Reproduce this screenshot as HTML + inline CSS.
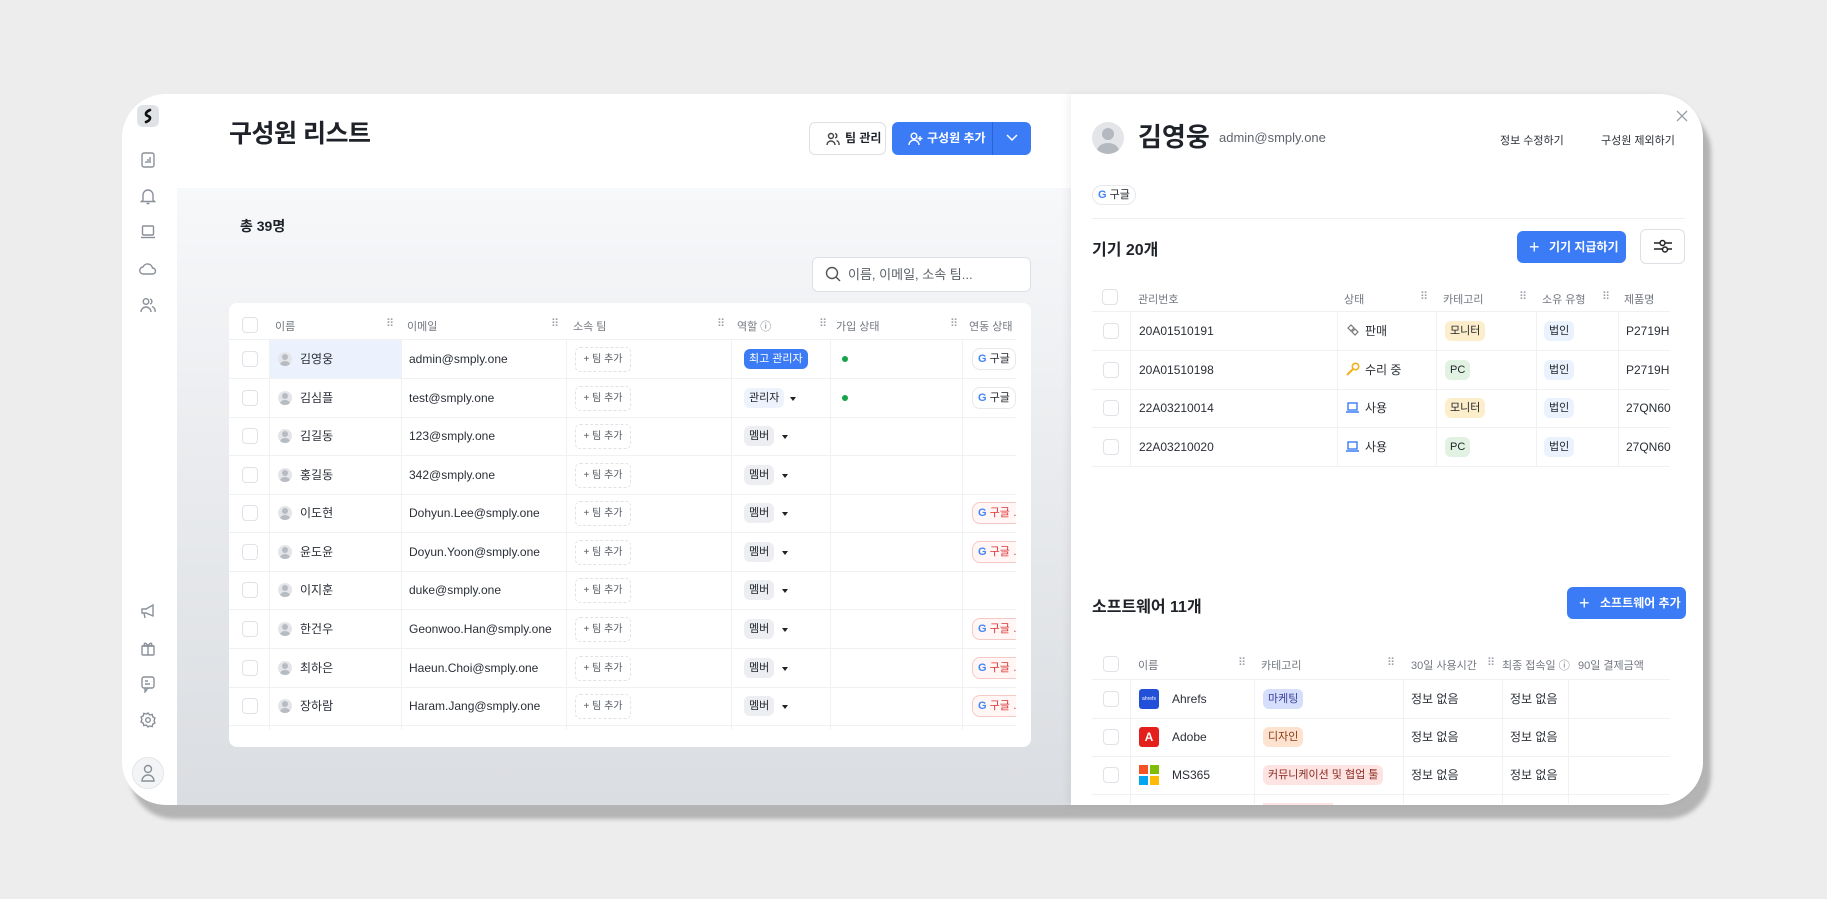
<!DOCTYPE html>
<html><head><meta charset="utf-8">
<style>
*{box-sizing:border-box;margin:0;padding:0}
body{width:1827px;height:899px;background:#ededed;font-family:"Liberation Sans","Noto Sans CJK KR",sans-serif;color:#1f2329;position:relative;overflow:hidden}
.a{position:absolute}
.win{left:122px;top:94px;width:1581px;height:711px;border-radius:44px;background:#fff;box-shadow:8px 14px 4px #b4b4b4;overflow:hidden}
.main{left:55px;top:94px;width:895px;height:617px;background:linear-gradient(#f7f8fa,#e9ebee 45%,#dadde1)}
.ic{stroke:#8a9099;fill:none;stroke-width:1.4}
.hdr{font-size:11px;color:#737880}
.dots{font-size:11px;color:#9aa0a8;letter-spacing:-1px}
.cb{width:16px;height:16px;border:1px solid #dfe2e6;border-radius:4px;background:#fff}
.row{left:0;width:100%;height:39px;border-bottom:1px solid #f0f1f3}
.t{font-size:12px;line-height:17px;color:#2a2f36;white-space:nowrap}
.av{width:14px;height:14px;border-radius:50%;background:#e3e5e8;overflow:hidden}
.av:before{content:"";position:absolute;left:4px;top:2px;width:6px;height:6px;border-radius:50%;background:#b7bcc3}
.av:after{content:"";position:absolute;left:2px;top:9px;width:10px;height:8px;border-radius:50%;background:#b7bcc3}
.team{width:56px;height:25px;border:1px dashed #dfe2e6;border-radius:5px;font-size:10px;color:#555b63;text-align:center;line-height:23px}
.badge{height:20px;border-radius:6px;font-size:11px;line-height:20px;padding:0 5px;white-space:nowrap}
.gp{height:22px;border:1px solid #e6e8eb;border-radius:8px;font-size:11px;line-height:20px;padding:0 5px;background:#fff;white-space:nowrap}
.gp.r{border-color:#f6c9c4;background:#fff6f5;color:#d33}
.G{font-weight:bold;color:#4285f4}
.vl{width:1px;background:#f0f1f3}
.tri{width:0;height:0;border-left:3px solid transparent;border-right:3px solid transparent;border-top:4px solid #222;top:18px}
</style></head><body>
<div class="a win">
  <div class="a" style="left:15px;top:11px;width:22px;height:22px;border-radius:6px;background:#dfe2e6"></div>
  <svg class="a" style="left:15px;top:11px" width="22" height="22"><path d="M13 5 C8 7 8 10 11 11 C14 12 14 15 9 17" stroke="#111" stroke-width="2.6" fill="none" stroke-linecap="round"/></svg>
  <svg class="a" style="left:19px;top:58px" width="14" height="16"><rect class="ic" x="1" y="1" width="12" height="14" rx="2"/><path class="ic" d="M5 11V9M7 11V7M9 11V5"/></svg>
  <svg class="a" style="left:18px;top:94px" width="16" height="17"><path class="ic" d="M3 12V7a5 5 0 0 1 10 0v5l1.5 1.5h-13zM6.5 15.5h3"/></svg>
  <svg class="a" style="left:18px;top:131px" width="16" height="14"><rect class="ic" x="2.5" y="1" width="11" height="9" rx="1"/><path class="ic" d="M1 12.5h14"/></svg>
  <svg class="a" style="left:17px;top:169px" width="18" height="12"><path class="ic" d="M4.5 11a3.5 3.5 0 0 1-.5-7A5 5 0 0 1 13.5 5a3 3 0 0 1 0 6z"/></svg>
  <svg class="a" style="left:18px;top:203px" width="16" height="16"><circle class="ic" cx="6" cy="4.5" r="2.8"/><path class="ic" d="M1 15a5 5 0 0 1 10 0M10 2a2.6 2.6 0 0 1 0 5M12 9.5a4.5 4.5 0 0 1 3 5.5"/></svg>
  <svg class="a" style="left:18px;top:509px" width="16" height="16"><path class="ic" d="M2 6h4l7-4v11l-7-3H2zM4 10l1 5"/></svg>
  <svg class="a" style="left:18px;top:546px" width="16" height="16"><rect class="ic" x="2" y="6" width="12" height="9" rx="1"/><path class="ic" d="M1.5 6h13M8 6v9M8 6C5 1 3 4 5 6M8 6c3-5 5-2 3 0"/></svg>
  <svg class="a" style="left:18px;top:582px" width="16" height="17"><rect class="ic" x="2" y="1" width="12" height="11" rx="2"/><path class="ic" d="M5 12v4l3-4M5 5h3M5 8h5"/></svg>
  <svg class="a" style="left:18px;top:618px" width="16" height="16"><circle class="ic" cx="8" cy="8" r="2.3"/><path class="ic" d="M8 1l1.7 2 2.5-.6.6 2.5 2.2 1.2-1 2.4 1 2.4-2.2 1.2-.6 2.5-2.5-.6L8 15l-1.7-2-2.5.6-.6-2.5L1 9.9l1-2.4-1-2.4 2.2-1.2.6-2.5 2.5.6z"/></svg>
  <div class="a" style="left:10px;top:663px;width:32px;height:32px;border-radius:50%;background:#f3f4f6;border:1px solid #e3e5e8"></div>
  <svg class="a" style="left:18px;top:670px" width="16" height="18"><circle class="ic" cx="8" cy="5" r="3.5"/><path class="ic" d="M2 17a6 6 0 0 1 12 0z"/></svg>

  <div class="a main"></div>
  <div class="a" style="left:107px;top:20px;font-size:25px;font-weight:bold;letter-spacing:-0.5px">구성원 리스트</div>
  <div class="a" style="left:687px;top:28px;width:77px;height:33px;border:1px solid #dde0e4;border-radius:6px;background:#fff;font-size:12px;font-weight:bold;line-height:31px;padding-left:35px">팀 관리</div>
  <svg class="a" style="left:704px;top:38px" width="14" height="14"><circle class="ic" cx="5" cy="4" r="2.5" style="stroke:#444"/><path class="ic" style="stroke:#444" d="M1 13a4 4 0 0 1 8 0M9 1.5a2.3 2.3 0 0 1 0 4.5M10.5 8.5a4 4 0 0 1 2.5 4.5"/></svg>
  <div class="a" style="left:770px;top:28px;width:139px;height:33px;border-radius:6px;background:#3b7bf6;color:#fff;font-size:12px;font-weight:bold;line-height:33px;padding-left:35px">구성원 추가</div>
  <div class="a" style="left:870px;top:28px;width:1px;height:33px;background:#2a63d6"></div>
  <svg class="a" style="left:786px;top:38px" width="16" height="14"><circle cx="6" cy="4" r="2.8" stroke="#fff" fill="none" stroke-width="1.4"/><path d="M1 13a5 5 0 0 1 10 0M12 4v5M9.5 6.5h5" stroke="#fff" fill="none" stroke-width="1.4"/></svg>
  <svg class="a" style="left:884px;top:40px" width="12" height="8"><path d="M1 1l5 5 5-5" stroke="#fff" fill="none" stroke-width="1.5"/></svg>
  <div class="a" style="left:118px;top:122px;font-size:14px;font-weight:bold">총 39명</div>
  <div class="a" style="left:690px;top:163px;width:219px;height:35px;border:1px solid #dde0e4;border-radius:6px;background:#fff;font-size:13px;color:#5c6168;line-height:33px;padding-left:35px">이름, 이메일, 소속 팀...</div>
  <svg class="a" style="left:703px;top:172px" width="16" height="17"><circle cx="7" cy="7" r="5.5" stroke="#555" fill="none" stroke-width="1.4"/><path d="M11 11l4 4" stroke="#555" stroke-width="1.4"/></svg>

  <div class="a" style="left:107px;top:209px;width:802px;height:444px;background:#fff;border-radius:8px;overflow:hidden">
    <div class="a" style="left:0;top:0;width:787px;height:444px;overflow:hidden">
      <div class="a cb" style="left:13px;top:14px"></div>
      <div class="a hdr" style="left:46px;top:15px">이름</div><div class="a dots" style="left:157px;top:14px">⠿</div>
      <div class="a hdr" style="left:178px;top:15px">이메일</div><div class="a dots" style="left:322px;top:14px">⠿</div>
      <div class="a hdr" style="left:344px;top:15px">소속 팀</div><div class="a dots" style="left:488px;top:14px">⠿</div>
      <div class="a hdr" style="left:508px;top:15px">역할 ⓘ</div><div class="a dots" style="left:590px;top:14px">⠿</div>
      <div class="a hdr" style="left:607px;top:15px">가입 상태</div><div class="a dots" style="left:721px;top:14px">⠿</div>
      <div class="a hdr" style="left:740px;top:15px">연동 상태</div>
      <div class="a" style="left:0;top:36px;width:787px;height:1px;background:#eef0f2"></div>
      <div class="a" style="left:40px;top:37px;width:132px;height:38px;background:#ebf2fd"></div>
      <div class="a vl" style="left:40px;top:37px;height:390px"></div>
      <div class="a vl" style="left:172px;top:37px;height:390px"></div>
      <div class="a vl" style="left:337px;top:37px;height:390px"></div>
      <div class="a vl" style="left:502px;top:37px;height:390px"></div>
      <div class="a vl" style="left:601px;top:37px;height:390px"></div>
      <div class="a vl" style="left:733px;top:37px;height:390px"></div>
    </div>
  </div>
</div>

<div class="a" style="left:229px;top:340px;width:787px;height:386px;overflow:hidden">
  <div class="a row" style="top:0"><div class="a cb" style="left:13px;top:11px"></div><div class="a av" style="left:49px;top:12px"></div><div class="a t" style="left:71px;top:11px">김영웅</div><div class="a t" style="left:180px;top:11px">admin@smply.one</div><div class="a team" style="left:346px;top:7px">+ 팀 추가</div><div class="a badge" style="left:515px;top:9px;background:#3b7bf6;color:#fff">최고 관리자</div><div class="a" style="left:613px;top:16px;width:6px;height:6px;border-radius:50%;background:#17a34a"></div><div class="a gp" style="left:743px;top:8px"><span class="G">G</span> 구글</div></div>
  <div class="a row" style="top:39px"><div class="a cb" style="left:13px;top:11px"></div><div class="a av" style="left:49px;top:12px"></div><div class="a t" style="left:71px;top:11px">김심플</div><div class="a t" style="left:180px;top:11px">test@smply.one</div><div class="a team" style="left:346px;top:7px">+ 팀 추가</div><div class="a badge" style="left:515px;top:9px;background:#edf3fd">관리자</div><div class="a tri" style="left:561px"></div><div class="a" style="left:613px;top:16px;width:6px;height:6px;border-radius:50%;background:#17a34a"></div><div class="a gp" style="left:743px;top:8px"><span class="G">G</span> 구글</div></div>
  <div class="a row" style="top:77px"><div class="a cb" style="left:13px;top:11px"></div><div class="a av" style="left:49px;top:12px"></div><div class="a t" style="left:71px;top:11px">김길동</div><div class="a t" style="left:180px;top:11px">123@smply.one</div><div class="a team" style="left:346px;top:7px">+ 팀 추가</div><div class="a badge" style="left:515px;top:9px;background:#eceef1">멤버</div><div class="a tri" style="left:553px"></div></div>
  <div class="a row" style="top:116px"><div class="a cb" style="left:13px;top:11px"></div><div class="a av" style="left:49px;top:12px"></div><div class="a t" style="left:71px;top:11px">홍길동</div><div class="a t" style="left:180px;top:11px">342@smply.one</div><div class="a team" style="left:346px;top:7px">+ 팀 추가</div><div class="a badge" style="left:515px;top:9px;background:#eceef1">멤버</div><div class="a tri" style="left:553px"></div></div>
  <div class="a row" style="top:154px"><div class="a cb" style="left:13px;top:11px"></div><div class="a av" style="left:49px;top:12px"></div><div class="a t" style="left:71px;top:11px">이도현</div><div class="a t" style="left:180px;top:11px">Dohyun.Lee@smply.one</div><div class="a team" style="left:346px;top:7px">+ 팀 추가</div><div class="a badge" style="left:515px;top:9px;background:#eceef1">멤버</div><div class="a tri" style="left:553px"></div><div class="a gp r" style="left:743px;top:8px"><span class="G">G</span> 구글 &#8230;</div></div>
  <div class="a row" style="top:193px"><div class="a cb" style="left:13px;top:11px"></div><div class="a av" style="left:49px;top:12px"></div><div class="a t" style="left:71px;top:11px">윤도윤</div><div class="a t" style="left:180px;top:11px">Doyun.Yoon@smply.one</div><div class="a team" style="left:346px;top:7px">+ 팀 추가</div><div class="a badge" style="left:515px;top:9px;background:#eceef1">멤버</div><div class="a tri" style="left:553px"></div><div class="a gp r" style="left:743px;top:8px"><span class="G">G</span> 구글 &#8230;</div></div>
  <div class="a row" style="top:231px"><div class="a cb" style="left:13px;top:11px"></div><div class="a av" style="left:49px;top:12px"></div><div class="a t" style="left:71px;top:11px">이지훈</div><div class="a t" style="left:180px;top:11px">duke@smply.one</div><div class="a team" style="left:346px;top:7px">+ 팀 추가</div><div class="a badge" style="left:515px;top:9px;background:#eceef1">멤버</div><div class="a tri" style="left:553px"></div></div>
  <div class="a row" style="top:270px"><div class="a cb" style="left:13px;top:11px"></div><div class="a av" style="left:49px;top:12px"></div><div class="a t" style="left:71px;top:11px">한건우</div><div class="a t" style="left:180px;top:11px">Geonwoo.Han@smply.one</div><div class="a team" style="left:346px;top:7px">+ 팀 추가</div><div class="a badge" style="left:515px;top:9px;background:#eceef1">멤버</div><div class="a tri" style="left:553px"></div><div class="a gp r" style="left:743px;top:8px"><span class="G">G</span> 구글 &#8230;</div></div>
  <div class="a row" style="top:309px"><div class="a cb" style="left:13px;top:11px"></div><div class="a av" style="left:49px;top:12px"></div><div class="a t" style="left:71px;top:11px">최하은</div><div class="a t" style="left:180px;top:11px">Haeun.Choi@smply.one</div><div class="a team" style="left:346px;top:7px">+ 팀 추가</div><div class="a badge" style="left:515px;top:9px;background:#eceef1">멤버</div><div class="a tri" style="left:553px"></div><div class="a gp r" style="left:743px;top:8px"><span class="G">G</span> 구글 &#8230;</div></div>
  <div class="a row" style="top:347px"><div class="a cb" style="left:13px;top:11px"></div><div class="a av" style="left:49px;top:12px"></div><div class="a t" style="left:71px;top:11px">장하람</div><div class="a t" style="left:180px;top:11px">Haram.Jang@smply.one</div><div class="a team" style="left:346px;top:7px">+ 팀 추가</div><div class="a badge" style="left:515px;top:9px;background:#eceef1">멤버</div><div class="a tri" style="left:553px"></div><div class="a gp r" style="left:743px;top:8px"><span class="G">G</span> 구글 &#8230;</div></div>
</div>

<div class="a" style="left:1071px;top:94px;width:632px;height:711px;background:#fff;border-radius:0 44px 44px 0;box-shadow:-3px 0 8px rgba(0,0,0,.06)"></div>
<div class="a" style="left:1092px;top:122px;width:32px;height:32px;border-radius:50%;background:#e3e5e8;overflow:hidden"><div class="a" style="left:10px;top:6px;width:12px;height:12px;border-radius:50%;background:#b4b9c0"></div><div class="a" style="left:5px;top:21px;width:22px;height:16px;border-radius:50%;background:#b4b9c0"></div></div>
<div class="a" style="left:1138px;top:120px;font-size:26px;font-weight:bold;line-height:34px">김영웅</div>
<div class="a" style="left:1219px;top:130px;font-size:13px;color:#5f656d">admin@smply.one</div>
<div class="a" style="left:1500px;top:132px;font-size:11px;color:#2a2f36">정보 수정하기</div>
<div class="a" style="left:1601px;top:132px;font-size:11px;color:#2a2f36">구성원 제외하기</div>
<svg class="a" style="left:1676px;top:110px" width="12" height="12"><path d="M1 1l10 10M11 1L1 11" stroke="#9aa0a8" stroke-width="1.3"/></svg>
<div class="a gp" style="left:1092px;top:185px;height:20px;line-height:18px;border-radius:10px"><span class="G">G</span> 구글</div>
<div class="a" style="left:1092px;top:218px;width:593px;height:1px;background:#eceef1"></div>
<div class="a" style="left:1092px;top:236px;font-size:16px;font-weight:bold">기기 20개</div>
<div class="a" style="left:1517px;top:231px;width:109px;height:32px;border-radius:6px;background:#3b7bf6;color:#fff;font-size:12px;font-weight:bold;line-height:32px;padding-left:32px">기기 지급하기</div>
<div class="a" style="left:1529px;top:238px;color:#fff;font-size:18px;line-height:18px">+</div>
<div class="a" style="left:1640px;top:229px;width:45px;height:35px;border:1px solid #dde0e4;border-radius:6px;background:#fff"></div>
<svg class="a" style="left:1653px;top:239px" width="20" height="15"><path d="M1 10h8M12 4h7M1 4h6M15 10h4" stroke="#222" stroke-width="1.5"/><circle cx="9.5" cy="4" r="2.5" stroke="#222" fill="none" stroke-width="1.5"/><circle cx="12" cy="10.5" r="2.5" stroke="#222" fill="none" stroke-width="1.5"/></svg>

<div class="a cb" style="left:1102px;top:289px"></div>
<div class="a hdr" style="left:1138px;top:291px">관리번호</div>
<div class="a hdr" style="left:1344px;top:291px">상태</div><div class="a dots" style="left:1420px;top:290px">⠿</div>
<div class="a hdr" style="left:1443px;top:291px">카테고리</div><div class="a dots" style="left:1519px;top:290px">⠿</div>
<div class="a hdr" style="left:1542px;top:291px">소유 유형</div><div class="a dots" style="left:1602px;top:290px">⠿</div>
<div class="a hdr" style="left:1624px;top:291px">제품명</div>
<div class="a" style="left:1092px;top:311px;width:578px;height:1px;background:#eef0f2"></div>
<div class="a vl" style="left:1130px;top:312px;height:155px"></div><div class="a vl" style="left:1337px;top:312px;height:155px"></div><div class="a vl" style="left:1436px;top:312px;height:155px"></div><div class="a vl" style="left:1536px;top:312px;height:155px"></div><div class="a vl" style="left:1618px;top:312px;height:155px"></div>
<div class="a" style="left:1092px;top:350px;width:578px;height:1px;background:#f0f1f3"></div>
<div class="a" style="left:1092px;top:389px;width:578px;height:1px;background:#f0f1f3"></div>
<div class="a" style="left:1092px;top:427px;width:578px;height:1px;background:#f0f1f3"></div>
<div class="a" style="left:1092px;top:466px;width:578px;height:1px;background:#f0f1f3"></div>

<div class="a cb" style="left:1103px;top:323px"></div><div class="a t" style="left:1139px;top:323px">20A01510191</div><svg class="a" style="left:1346px;top:324px" width="14" height="14"><path d="M2 4l3-3 3 3-3 3zM6 8l3-3 3 3-3 3z" stroke="#777" fill="none" stroke-width="1.2"/></svg><div class="a t" style="left:1365px;top:323px">판매</div><div class="a badge" style="left:1445px;top:321px;background:#fdeecb">모니터</div><div class="a badge" style="left:1544px;top:321px;background:#eaf2fd">법인</div><div class="a t" style="left:1626px;top:323px">P2719H</div>
<div class="a cb" style="left:1103px;top:362px"></div><div class="a t" style="left:1139px;top:362px">20A01510198</div><svg class="a" style="left:1346px;top:362px" width="14" height="14"><circle cx="9.5" cy="4.5" r="3.2" stroke="#f2b01e" fill="none" stroke-width="1.6"/><path d="M7 7l-6 6" stroke="#f2b01e" stroke-width="2"/></svg><div class="a t" style="left:1365px;top:362px">수리 중</div><div class="a badge" style="left:1445px;top:360px;background:#e2f2e2">PC</div><div class="a badge" style="left:1544px;top:360px;background:#eaf2fd">법인</div><div class="a t" style="left:1626px;top:362px">P2719H</div>
<div class="a cb" style="left:1103px;top:400px"></div><div class="a t" style="left:1139px;top:400px">22A03210014</div><svg class="a" style="left:1346px;top:402px" width="13" height="11"><rect x="2" y="1" width="9" height="7" stroke="#3b7bf6" fill="none" stroke-width="1.4"/><path d="M0 10h13" stroke="#3b7bf6" stroke-width="1.5"/></svg><div class="a t" style="left:1365px;top:400px">사용</div><div class="a badge" style="left:1445px;top:398px;background:#fdeecb">모니터</div><div class="a badge" style="left:1544px;top:398px;background:#eaf2fd">법인</div><div class="a t" style="left:1626px;top:400px">27QN60</div>
<div class="a cb" style="left:1103px;top:439px"></div><div class="a t" style="left:1139px;top:439px">22A03210020</div><svg class="a" style="left:1346px;top:441px" width="13" height="11"><rect x="2" y="1" width="9" height="7" stroke="#3b7bf6" fill="none" stroke-width="1.4"/><path d="M0 10h13" stroke="#3b7bf6" stroke-width="1.5"/></svg><div class="a t" style="left:1365px;top:439px">사용</div><div class="a badge" style="left:1445px;top:437px;background:#e2f2e2">PC</div><div class="a badge" style="left:1544px;top:437px;background:#eaf2fd">법인</div><div class="a t" style="left:1626px;top:439px">27QN60</div>

<div class="a" style="left:1092px;top:593px;font-size:16px;font-weight:bold">소프트웨어 11개</div>
<div class="a" style="left:1567px;top:587px;width:119px;height:32px;border-radius:6px;background:#3b7bf6;color:#fff;font-size:12px;font-weight:bold;line-height:32px;padding-left:33px">소프트웨어 추가</div>
<div class="a" style="left:1579px;top:594px;color:#fff;font-size:18px;line-height:18px">+</div>

<div class="a cb" style="left:1103px;top:656px"></div>
<div class="a hdr" style="left:1138px;top:657px">이름</div><div class="a dots" style="left:1238px;top:656px">⠿</div>
<div class="a hdr" style="left:1261px;top:657px">카테고리</div><div class="a dots" style="left:1387px;top:656px">⠿</div>
<div class="a hdr" style="left:1411px;top:657px">30일 사용시간</div><div class="a dots" style="left:1487px;top:656px">⠿</div>
<div class="a hdr" style="left:1502px;top:657px">최종 접속일 ⓘ</div>
<div class="a hdr" style="left:1576px;top:657px;background:#fff;padding-left:2px">90일 결제금액</div>
<div class="a" style="left:1092px;top:679px;width:578px;height:1px;background:#eef0f2"></div>
<div class="a" style="left:1092px;top:718px;width:578px;height:1px;background:#f0f1f3"></div>
<div class="a" style="left:1092px;top:756px;width:578px;height:1px;background:#f0f1f3"></div>
<div class="a" style="left:1092px;top:794px;width:578px;height:1px;background:#f0f1f3"></div>
<div class="a vl" style="left:1130px;top:680px;height:124px"></div><div class="a vl" style="left:1254px;top:680px;height:124px"></div><div class="a vl" style="left:1403px;top:680px;height:124px"></div><div class="a vl" style="left:1502px;top:680px;height:124px"></div><div class="a vl" style="left:1568px;top:680px;height:124px"></div>

<div class="a cb" style="left:1103px;top:691px"></div><div class="a" style="left:1139px;top:689px;width:20px;height:20px;border-radius:3px;background:#2350d8;color:#fff;font-size:5px;line-height:20px;text-align:center">ahrefs</div><div class="a t" style="left:1172px;top:691px">Ahrefs</div><div class="a badge" style="left:1263px;top:689px;background:#d5defb;color:#3a3f9a">마케팅</div><div class="a t" style="left:1411px;top:691px">정보 없음</div><div class="a t" style="left:1510px;top:691px">정보 없음</div>
<div class="a cb" style="left:1103px;top:729px"></div><div class="a" style="left:1139px;top:727px;width:20px;height:20px;border-radius:3px;background:#e3201b;color:#fff;font-size:12px;font-weight:bold;line-height:20px;text-align:center">A</div><div class="a t" style="left:1172px;top:729px">Adobe</div><div class="a badge" style="left:1263px;top:727px;background:#fde3cf;color:#8a3a10">디자인</div><div class="a t" style="left:1411px;top:729px">정보 없음</div><div class="a t" style="left:1510px;top:729px">정보 없음</div>
<div class="a cb" style="left:1103px;top:767px"></div>
<div class="a" style="left:1139px;top:765px;width:9px;height:9px;background:#f35325"></div><div class="a" style="left:1150px;top:765px;width:9px;height:9px;background:#81bc06"></div><div class="a" style="left:1139px;top:776px;width:9px;height:9px;background:#05a6f0"></div><div class="a" style="left:1150px;top:776px;width:9px;height:9px;background:#ffba08"></div>
<div class="a t" style="left:1172px;top:767px">MS365</div><div class="a badge" style="left:1263px;top:765px;background:#fde4e2;color:#8a2a22">커뮤니케이션 및 협업 툴</div><div class="a t" style="left:1411px;top:767px">정보 없음</div><div class="a t" style="left:1510px;top:767px">정보 없음</div>
<div class="a" style="left:1263px;top:803px;width:70px;height:2px;background:#fde4e2"></div>
</body></html>
